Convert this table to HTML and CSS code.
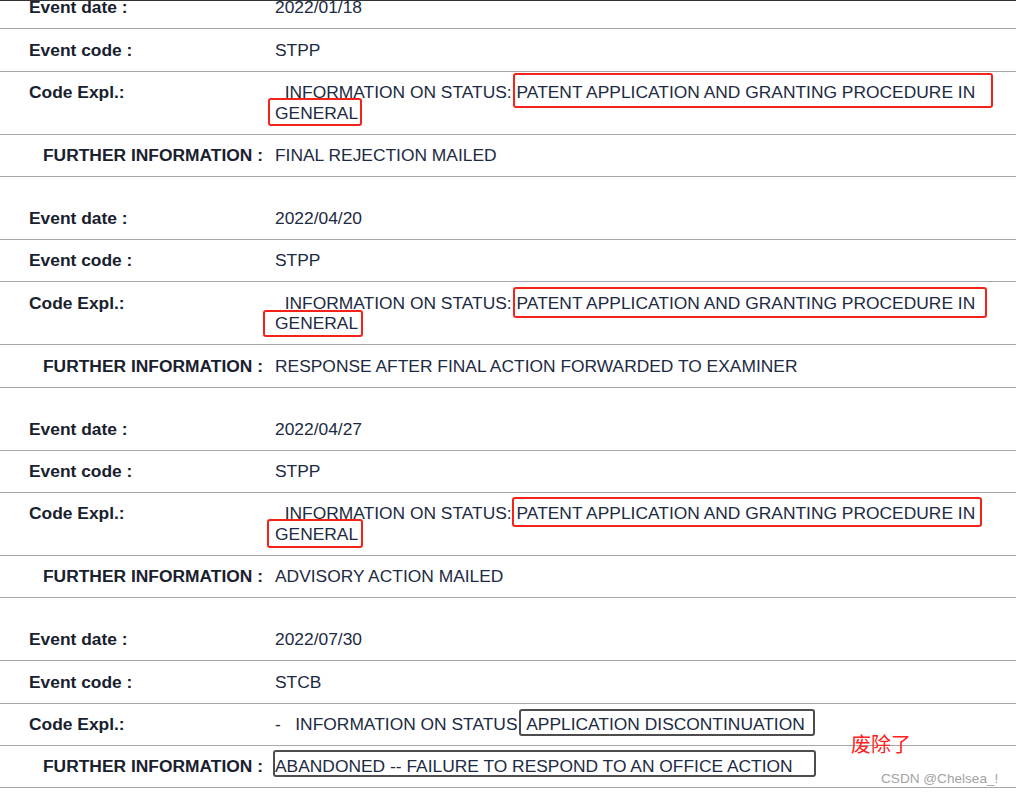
FILE: index.html
```html
<!DOCTYPE html>
<html lang="en">
<head>
<meta charset="utf-8">
<title>Event history</title>
<link rel="stylesheet" href="styles.css">
</head>
<body>
<div class="page">
  <div class="topline"></div>
  <div class="events">
    <section class="event first">
      <div class="row date"><div class="label">Event date :</div><div class="value">2022/01/18</div></div>
      <div class="row"><div class="label">Event code :</div><div class="value">STPP</div></div>
      <div class="row"><div class="label">Code Expl.:</div><div class="value">&nbsp;&nbsp;INFORMATION ON STATUS: PATENT APPLICATION AND GRANTING PROCEDURE IN GENERAL</div></div>
      <div class="row"><div class="label further">FURTHER INFORMATION :</div><div class="value">FINAL REJECTION MAILED</div></div>
    </section>
    <section class="event">
      <div class="row date"><div class="label">Event date :</div><div class="value">2022/04/20</div></div>
      <div class="row"><div class="label">Event code :</div><div class="value">STPP</div></div>
      <div class="row"><div class="label">Code Expl.:</div><div class="value">&nbsp;&nbsp;INFORMATION ON STATUS: PATENT APPLICATION AND GRANTING PROCEDURE IN GENERAL</div></div>
      <div class="row"><div class="label further">FURTHER INFORMATION :</div><div class="value">RESPONSE AFTER FINAL ACTION FORWARDED TO EXAMINER</div></div>
    </section>
    <section class="event">
      <div class="row date"><div class="label">Event date :</div><div class="value">2022/04/27</div></div>
      <div class="row"><div class="label">Event code :</div><div class="value">STPP</div></div>
      <div class="row"><div class="label">Code Expl.:</div><div class="value">&nbsp;&nbsp;INFORMATION ON STATUS: PATENT APPLICATION AND GRANTING PROCEDURE IN GENERAL</div></div>
      <div class="row"><div class="label further">FURTHER INFORMATION :</div><div class="value">ADVISORY ACTION MAILED</div></div>
    </section>
    <section class="event">
      <div class="row date"><div class="label">Event date :</div><div class="value">2022/07/30</div></div>
      <div class="row"><div class="label">Event code :</div><div class="value">STCB</div></div>
      <div class="row"><div class="label">Code Expl.:</div><div class="value">-&nbsp;&nbsp; INFORMATION ON STATUS&nbsp; APPLICATION DISCONTINUATION</div></div>
      <div class="row"><div class="label further">FURTHER INFORMATION :</div><div class="value">ABANDONED -- FAILURE TO RESPOND TO AN OFFICE ACTION</div></div>
    </section>
  </div>

  <div class="mark red m1"></div>
  <div class="mark red m2"></div>
  <div class="mark red m3"></div>
  <div class="mark red m4"></div>
  <div class="mark red m5"></div>
  <div class="mark red m6"></div>
  <div class="mark gray m7"></div>
  <div class="mark gray m8"></div>
  <div class="note">废除了</div>
  <div class="watermark">CSDN @Chelsea_!</div>
</div>
</body>
</html>
```

FILE: styles.css
```css
html, body {
  margin: 0;
  padding: 0;
  background: #ffffff;
  overflow: hidden;
}

.page {
  position: relative;
  width: 1016px;
  height: 797px;
  font-family: "Liberation Sans", Arial, sans-serif;
  font-size: 17.4px;
  color: #1f2d45;
}

.topline {
  height: 1px;
  background: #333333;
}

.events {
  margin-top: -14px;
}

.row {
  display: grid;
  grid-template-columns: 275px 1fr;
  padding: 10.33px 0;
  line-height: 20.67px;
  border-bottom: 1px solid #a8a8a8;
}

.row.date {
  padding-top: 31px;
}

.event.first .row.date {
  padding-top: 10.33px;
}

.label {
  padding-left: 29px;
  font-weight: bold;
  color: #18212d;
}

.label.further {
  padding-left: 43px;
}

.value {
  color: #1c2a42;
}

.mark {
  position: absolute;
  box-sizing: border-box;
  border-radius: 3px;
}

.mark.red {
  border: 2.5px solid #f5221a;
}

.mark.gray {
  border: 2.5px solid #4d4d4d;
}

.m1 { left: 513px; top: 73px; width: 480px; height: 35px; }
.m2 { left: 268px; top: 98px; width: 94px; height: 28px; }
.m3 { left: 513px; top: 287px; width: 474px; height: 31px; }
.m4 { left: 263px; top: 310px; width: 100px; height: 27px; }
.m5 { left: 512px; top: 497px; width: 470px; height: 30px; }
.m6 { left: 267px; top: 519px; width: 96px; height: 29px; }
.m7 { left: 519px; top: 709px; width: 296px; height: 27px; }
.m8 { left: 273px; top: 750px; width: 543px; height: 27px; }

.note {
  position: absolute;
  left: 851px;
  top: 731px;
  font-family: "Noto Sans CJK SC", sans-serif;
  font-size: 20px;
  line-height: 26px;
  color: #ff2020;
}

.watermark {
  position: absolute;
  left: 881px;
  top: 769px;
  font-family: "Liberation Sans", Arial, sans-serif;
  font-size: 13.6px;
  line-height: 19px;
  color: #a3a3a3;
}
```
